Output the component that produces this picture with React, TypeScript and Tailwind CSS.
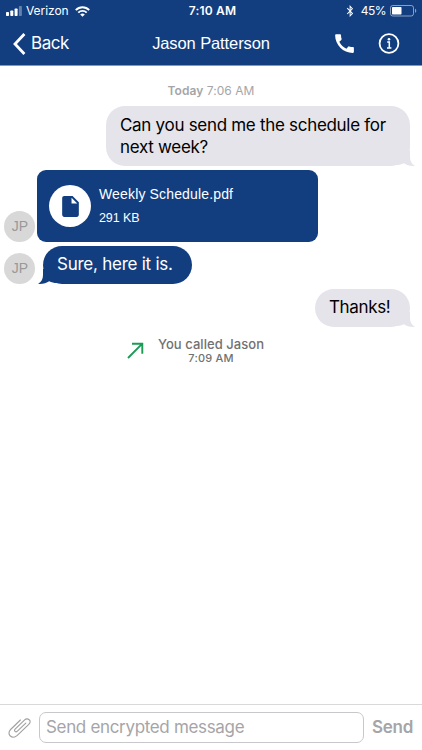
import { FaBluetoothB } from 'react-icons/fa';
import { MdCall, MdInsertDriveFile } from 'react-icons/md';

// iOS status bar
function StatusBar() {
  return (
    <div className="grid h-[22px] grid-cols-3 items-center pr-[5px] pl-[6px] text-[12px] leading-none">
      <div className="flex items-center">
        <svg width="17" height="10" viewBox="0 0 17 10" fill="currentColor">
          <rect x="0" y="6" width="3" height="4" rx="0.7" />
          <rect x="4.3" y="4.5" width="3" height="5.5" rx="0.7" />
          <rect x="8.6" y="2.5" width="3" height="7.5" rx="0.7" />
          <rect x="12.9" y="0" width="3" height="10" rx="0.7" opacity="0.35" />
        </svg>
        <span className="ml-[3px] tracking-[-0.05px]">Verizon</span>
        <svg className="ml-[6px]" width="15" height="11" viewBox="0 0 15 11" fill="none" stroke="currentColor" strokeWidth="1.9">
          <path d="M0.8 4.1C4.5 0.3 10.5 0.3 14.2 4.1" />
          <path d="M3.3 6.6C5.6 4.3 9.4 4.3 11.7 6.6" />
          <path d="M7.5 10.8L5.2 8.5C6.5 7.3 8.5 7.3 9.8 8.5Z" fill="currentColor" stroke="none" />
        </svg>
      </div>
      <div className="pl-[2px] text-center font-semibold tracking-[0.2px]">7:10 AM</div>
      <div className="flex items-center justify-end">
        <FaBluetoothB size={12} />
        <span className="ml-[5px] tracking-[-0.5px]">45%</span>
        <svg className="ml-[4px]" width="27" height="12" viewBox="0 0 27 12" fill="none">
          <rect x="0.5" y="0.5" width="23" height="10.5" rx="2.3" stroke="currentColor" opacity="0.5" />
          <rect x="2" y="2" width="9.5" height="7.5" rx="0.7" fill="currentColor" />
          <path d="M25 3.7C26.7 4.2 26.7 7.3 25 7.8Z" fill="currentColor" opacity="0.5" />
        </svg>
      </div>
    </div>
  );
}

function NavBar() {
  return (
    <div className="grid h-[43px] grid-cols-[140px_142px_140px] items-center">
      <button className="flex items-center pl-[13px] text-[17px] leading-none tracking-[-0.45px]">
        <svg width="13" height="22" viewBox="0 0 13 22" fill="none" stroke="currentColor" strokeWidth="2.8">
          <path d="M11.4 1L2 11L11.4 21" />
        </svg>
        <span className="ml-[5px]">Back</span>
      </button>
      <h1 className="text-center font-['Liberation_Sans',sans-serif] text-[16.5px] leading-none tracking-[-0.1px] whitespace-nowrap">
        Jason Patterson
      </h1>
      <div className="flex items-center justify-end pr-[22px]">
        <MdCall size={25} />
        <svg className="ml-[21px]" width="22" height="22" viewBox="0 0 22 22" fill="none" stroke="currentColor">
          <circle cx="11" cy="10.5" r="9.4" strokeWidth="1.8" />
          <path d="M9.2 9H11.3V14.8M9 14.9H13.4" strokeWidth="1.5" />
          <circle cx="11" cy="6.2" r="1.3" fill="currentColor" stroke="none" />
        </svg>
      </div>
    </div>
  );
}

// Small hook at the bottom corner of a bubble
function Tail({ className }: { className: string }) {
  return (
    <svg className={className} width="20" height="15" viewBox="0 0 20 15" fill="currentColor">
      <path d="M15 0V6C15 10 16.5 13 20 14.8C15.5 15.2 11.5 14 8.8 12.2C6.5 13.3 4 14 1 14V0Z" />
    </svg>
  );
}

function Avatar({ initials }: { initials: string }) {
  return (
    <div className="flex size-[31px] shrink-0 items-center justify-center rounded-full bg-[#d8d8d8] pl-px font-['Liberation_Sans',sans-serif] text-[14px] text-[#999]">
      {initials}
    </div>
  );
}

export default function App() {
  return (
    <div className="flex h-[750px] w-[422px] flex-col overflow-hidden bg-white font-['Inter',sans-serif]">
      <header className="h-[66px] shrink-0 border-b border-[#8099bd] bg-[#123e80] text-white">
        <StatusBar />
        <NavBar />
      </header>

      <main className="flex flex-1 flex-col">
        <div className="mt-[18px] h-[14px] text-center text-[12px] leading-[14px] tracking-[0.05px] text-[#a5a5a8]">
          <span className="font-semibold">Today</span> 7:06 AM
        </div>

        <div className="relative mt-[8px] mr-[12px] h-[60px] w-[304px] self-end rounded-[19px] bg-[#e5e4eb] pt-[8px] pl-[14px] text-[17px] leading-[22px] tracking-[-0.3px] text-black">
          Can you send me the schedule for
          <br />
          next week?
          <Tail className="absolute -right-[5px] bottom-0 text-[#e5e4eb]" />
        </div>

        <div className="mt-[4px] flex items-end pl-[4px]">
          <Avatar initials="JP" />
          <div className="ml-[2px] flex h-[72px] w-[281px] items-center rounded-[9px] bg-[#123e80] pl-[12px] font-['Liberation_Sans',sans-serif] text-white">
            <div className="flex size-[42px] items-center justify-center rounded-full bg-white text-[#123e80]">
              <MdInsertDriveFile size={25} />
            </div>
            <div className="ml-[8px]">
              <div className="text-[14px] leading-[24px] tracking-[0.15px]">Weekly Schedule.pdf</div>
              <div className="text-[12.5px] leading-[24px] tracking-[-0.1px]">291 KB</div>
            </div>
          </div>
        </div>

        <div className="mt-[4px] flex items-end pl-[4px]">
          <Avatar initials="JP" />
          <div className="relative ml-[8px] h-[38px] w-[149px] rounded-[19px] bg-[#123e80] pt-[7px] pl-[14px] text-[17px] leading-[22px] tracking-[-0.25px] whitespace-nowrap text-white">
            Sure, here it is.
            <Tail className="absolute bottom-0 -left-[5px] -scale-x-100 text-[#123e80]" />
          </div>
        </div>

        <div className="relative mt-[5px] mr-[12px] h-[38px] w-[95px] self-end rounded-[19px] bg-[#e5e4eb] pt-[7px] pl-[14px] text-[17px] leading-[22px] tracking-[-0.35px] text-black">
          Thanks!
          <Tail className="absolute -right-[5px] bottom-0 text-[#e5e4eb]" />
        </div>

        <div className="mt-[9px] flex items-center pl-[127px] text-[#717171]">
          <svg width="17" height="17" viewBox="0 0 17 17" fill="none" stroke="#1c9b57" strokeWidth="1.9">
            <path d="M1 16L15.3 1.7M5 1.7H15.3V11.7" />
          </svg>
          <div className="ml-[14px] flex flex-col items-center font-medium">
            <span className="text-[13px] leading-[16px] tracking-[0.05px]">You called Jason</span>
            <span className="text-[11px] leading-[13px] tracking-[0.2px]">7:09 AM</span>
          </div>
        </div>
      </main>

      <footer className="flex h-[46px] shrink-0 items-center border-t border-[#d9d9d9] pl-[8px]">
        <svg width="24" height="22" viewBox="0 0 24 22" fill="none" stroke="#a0a0a0" strokeWidth="1.1" strokeLinecap="round">
          <path d="M17.8 6.2L9.4 14.2C7.7 15.8 5.5 13.9 7.1 12.2L16.4 3.1C19.3 0.3 24.7 3.5 20.8 7.3L9.3 18.4C4.2 22.9-2 17.4 2.6 12.5L12.4 3" />
        </svg>
        <div className="ml-[7px] flex h-[31px] w-[325px] items-center rounded-[7px] border border-[#c8c8cb] pt-px pl-[6px] text-[17px] tracking-[-0.33px] text-[#a5a5a8]">
          Send encrypted message
        </div>
        <button className="ml-[8px] text-[17px] font-semibold tracking-[-0.25px] text-[#a5a5a8]">Send</button>
      </footer>
    </div>
  );
}
